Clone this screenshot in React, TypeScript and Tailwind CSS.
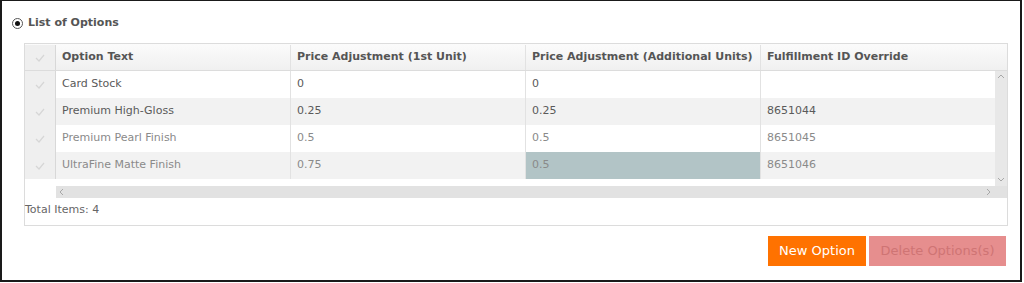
const COLUMNS = [
  'Option Text',
  'Price Adjustment (1st Unit)',
  'Price Adjustment (Additional Units)',
  'Fulfillment ID Override',
];

interface Row {
  text: string;
  first: string;
  additional: string;
  fulfillment: string;
  muted: boolean;
}

const ROWS: Row[] = [
  { text: 'Card Stock', first: '0', additional: '0', fulfillment: '', muted: false },
  { text: 'Premium High-Gloss', first: '0.25', additional: '0.25', fulfillment: '8651044', muted: false },
  { text: 'Premium Pearl Finish', first: '0.5', additional: '0.5', fulfillment: '8651045', muted: true },
  { text: 'UltraFine Matte Finish', first: '0.75', additional: '0.5', fulfillment: '8651046', muted: true },
];

const Check = () => (
  <svg width="10" height="8" viewBox="0 0 10 8" fill="none">
    <polyline points="1,4 4,7 9,1" stroke="#d6d6d6" strokeWidth="1.2" />
  </svg>
);

const Chevron = ({ dir }: { dir: 'up' | 'down' | 'left' | 'right' }) => {
  const pts = {
    up: '1,5 4,2 7,5',
    down: '1,2 4,5 7,2',
    left: '5,1 2,4 5,7',
    right: '2,1 5,4 2,7',
  }[dir];
  return (
    <svg width="8" height="8" viewBox="0 0 8 8" fill="none">
      <polyline points={pts} stroke="#a8a8a8" strokeWidth="1" />
    </svg>
  );
};

export default function App() {
  return (
    <div className="h-[283px] w-[1024px] bg-white font-['DejaVu_Sans',sans-serif]">
      <div className="flex h-[282px] w-[1022px] flex-col border-2 border-t border-[#1a1a1a] bg-white pl-[22px] pr-[12px]">
        {/* heading */}
        <div className="mt-[15px] -ml-[12px] flex h-[14px] items-center gap-[5px]">
          <span className="flex h-[11px] w-[11px] items-center justify-center rounded-full border-[1.5px] border-[#555] bg-white">
            <span className="h-[5px] w-[5px] rounded-full bg-[#111]" />
          </span>
          <span className="text-[11px] font-bold text-[#555]">List of Options</span>
        </div>

        {/* grid */}
        <div className="mt-[13px] flex h-[183px] w-[984px] flex-col border border-[#dcdcdc] text-[11px]">
          <div className="flex h-[27px] border-b border-[#dcdcdc] bg-gradient-to-b from-[#fbfbfb] to-[#f0f0f0] pt-[1px]">
            <div className="flex w-[31px] items-center justify-center border-r border-[#d8d8d8] bg-[#efefef]">
              <Check />
            </div>
            {COLUMNS.map((c) => (
              <div
                key={c}
                className="flex w-[235px] items-center border-r border-[#e2e2e2] px-[6px] font-bold text-[#555] last:w-[234px] last:border-r-0">
                {c}
              </div>
            ))}
          </div>

          <div className="flex h-[115px]">
            <div className="flex w-[970px] flex-col">
              {ROWS.map((r, i) => (
                <div
                  key={r.text}
                  className={`flex h-[27px] ${i % 2 === 1 ? 'bg-[#f2f2f2]' : 'bg-white'} ${r.muted ? 'text-[#8a8a8a]' : 'text-[#5a5a5a]'}`}>
                  <div className="flex w-[31px] items-center justify-center border-r border-[#d8d8d8] bg-[#efefef]">
                    <Check />
                  </div>
                  <div className="flex w-[235px] items-center border-r border-[#e2e2e2] px-[6px]">{r.text}</div>
                  <div className="flex w-[235px] items-center border-r border-[#e2e2e2] px-[6px]">{r.first}</div>
                  <div
                    className={`flex w-[235px] items-center border-r border-[#e2e2e2] px-[6px] ${i === 3 ? 'bg-[#b2c4c6]' : ''}`}>
                    {r.additional}
                  </div>
                  <div className="flex w-[234px] items-center px-[6px]">{r.fulfillment}</div>
                </div>
              ))}
            </div>
            <div className="flex w-[12px] flex-col items-center justify-between bg-[#e8e8e8] py-[2px]">
              <Chevron dir="up" />
              <Chevron dir="down" />
            </div>
          </div>

          <div className="flex h-[12px]">
            <div className="w-[31px]" />
            <div className="flex flex-1 items-center justify-between bg-[#e2e2e2] px-[2px] pr-[14px]">
              <Chevron dir="left" />
              <Chevron dir="right" />
            </div>
          </div>

          <div className="mt-[4px] text-[11px] text-[#666]">Total Items: 4</div>
        </div>

        {/* actions */}
        <div className="mt-[10px] flex w-[982px] justify-end gap-[3px]">
          <button className="h-[30px] w-[98px] bg-[#ff7200] text-[13px] text-white">New Option</button>
          <button className="h-[30px] w-[137px] bg-[#e68e8e] text-[13px] text-[#cf7474]">Delete Options(s)</button>
        </div>
      </div>
    </div>
  );
}
